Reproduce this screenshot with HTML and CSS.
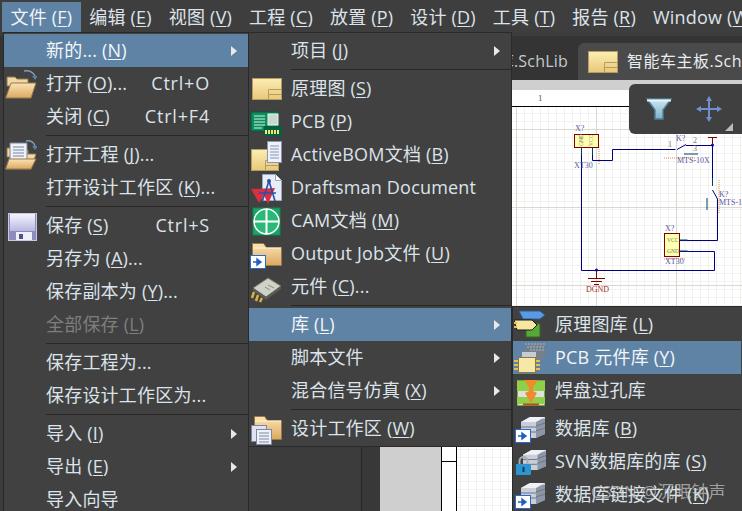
FILE: index.html
```html
<!DOCTYPE html>
<html lang="zh-CN">
<head>
<meta charset="utf-8">
<title>Altium Designer</title>
<link rel="stylesheet" href="styles.css">
</head>
<body>
<svg class="defs" aria-hidden="true">
  <defs>
    <linearGradient id="tan" x1="0" y1="0" x2="0" y2="1"><stop offset="0" stop-color="#fbeeb4"/><stop offset="1" stop-color="#e9c878"/></linearGradient>
    <linearGradient id="folder" x1="0" y1="0" x2="0" y2="1"><stop offset="0" stop-color="#fbe3b4"/><stop offset="1" stop-color="#dca860"/></linearGradient>
    <linearGradient id="floppy" x1="0" y1="0" x2="0" y2="1"><stop offset="0" stop-color="#f4f4ff"/><stop offset="1" stop-color="#b8b8e0"/></linearGradient>
    <linearGradient id="steel" x1="0" y1="0" x2="1" y2="1"><stop offset="0" stop-color="#e4e8ee"/><stop offset="1" stop-color="#8f98a8"/></linearGradient>
    <linearGradient id="funnel" x1="0" y1="0" x2="0" y2="1"><stop offset="0" stop-color="#cfe6f0"/><stop offset="1" stop-color="#7fb0c8"/></linearGradient>
    <symbol id="i-arrowbox" viewBox="0 0 16 14">
      <rect x=".5" y=".5" width="15" height="13" fill="#fff" stroke="#2a6ad0"/>
      <path d="M3 7h6M7 4l4 3-4 3z" fill="#1f5fc0" stroke="#1f5fc0" stroke-width="1.4"/>
    </symbol>
    <symbol id="i-db" viewBox="0 0 26 23">
      <path d="M1 6 10 1h15v17l-9 4H1z" fill="url(#steel)"/>
      <path d="M16 3h9v15l-9 4z" fill="#8d96a6"/>
      <path d="M1 6h15v16H1z" fill="#c9ced8"/>
      <path d="M1 11h15M1 16h15M16 10l9-3M16 15l9-3" stroke="#6e7686" fill="none"/>
      <path d="M1 6 10 1h15l-9 5z" fill="#eef1f5"/>
    </symbol>
    <symbol id="i-openfolder" viewBox="0 0 32 32">
      <path d="M2 9h8l2 2h11v7H2z" fill="#f0d7a4" stroke="#94794c"/>
      <path d="M.7 30 6 15h25l-5 15z" fill="url(#folder)" stroke="#94794c"/>
    </symbol>
  </defs>
</svg>

<div class="page">
  <nav class="menubar">
    <span class="top active">文件 (<u>F</u>)</span>
    <span class="top">编辑 (<u>E</u>)</span>
    <span class="top">视图 (<u>V</u>)</span>
    <span class="top">工程 (<u>C</u>)</span>
    <span class="top">放置 (<u>P</u>)</span>
    <span class="top">设计 (<u>D</u>)</span>
    <span class="top">工具 (<u>T</u>)</span>
    <span class="top">报告 (<u>R</u>)</span>
    <span class="top">Window (<u>W</u>)</span>
  </nav>

  <div class="tabs">
    <div class="tab">原理图库.SchLib</div>
    <div class="tab current">
      <svg class="tab-icon" viewBox="0 0 30 22"><rect x=".5" y=".5" width="29" height="21" fill="url(#tan)" stroke="#b49c62"/><path d="M16.500 21.500v-10h13M16.500 16.500h13" fill="none" stroke="#b49c62"/></svg>
      <span>智能车主板.SchDoc</span>
    </div>
  </div>

  <div class="work">
    <div class="panel"></div>
    <div class="gutter"></div>
    <div class="doc">
      <div class="strip"></div>
      <div class="sheet">
        <div class="ruler-top"><span>1</span></div>
        <div class="sheet-body">
          <div class="ruler-left"><div class="cell"></div></div>
          <div class="grid">
            <svg class="schematic" viewBox="457 107 285 404" width="285" height="404">
              <g fill="none" stroke="#e08a50" stroke-dasharray="1 1">
                <path d="M599 147v17M664 158h31M719 180v34M664 259h22"/>
              </g>
              <g fill="none" stroke="#000080" stroke-width="1">
                <path d="M581.500 147v123.500h133v-19h-35"/>
                <path d="M592.500 147v13.500h20v-11h63"/>
                <path d="M686 145.500h27M712.500 145.500v33M717.500 199v41.500h-38"/>
                <path d="M677 149.500l9-5M712.500 190l5 9"/>
              </g>
              <g fill="none" stroke="#004060" stroke-width="1">
                <path d="M581.500 147v8M592.500 147v8M684 154h14M707 198v12M679.500 240h8M679.500 251h8M712.500 178v8"/>
              </g>
              <g fill="#0000c0">
                <circle cx="712.500" cy="145" r="1.500"/>
                <circle cx="596.500" cy="270" r="1.500"/>
              </g>
              <g fill="none" stroke="#800000">
                <rect x="574.500" y="134.500" width="24" height="13" fill="#ffffb0"/>
                <rect x="664.500" y="233.500" width="15" height="23" fill="#ffffb0"/>
                <path d="M596.500 270v8M588 278.500h17M591 281.500h11M594 284.500h5M712.500 145v-8M708 137.500h9"/>
              </g>
              <g class="sch-blue">
                <text x="575" y="131">X?</text>
                <text x="574" y="168">XT30</text>
                <text x="665" y="231">X?</text>
                <text x="665" y="264">XT30</text>
                <text x="676" y="141">K?</text>
                <text x="677" y="163">MTS-10X</text>
                <text x="719" y="197">K?</text>
                <text x="719" y="205">MTS-10X</text>
              </g>
              <g class="sch-grey">
                <text class="pin" x="667" y="242">VCC</text>
                <text class="pin" x="667" y="253">GND</text>
                <text x="668" y="147">1</text>
                <text x="693" y="143">2</text>
                <text x="693" y="151">3</text>
                <text class="pin" x="581" y="146" transform="rotate(-90 581 146)" dy="2">GND</text>
                <text class="pin" x="591" y="146" transform="rotate(-90 591 146)" dy="2">VCC</text>
              </g>
              <text class="sch-red" x="586" y="292">DGND</text>
            </svg>
          </div>
        </div>
      </div>
    </div>
  </div>

  <div class="tools">
    <svg class="funnel" viewBox="0 0 26 22"><path d="M1 1h24l-8 11v9H9v-9z" fill="url(#funnel)" stroke="#4f7f98" stroke-width="1.400"/><path d="M1 2.500h24" stroke="#e8f4f8" stroke-width="2"/></svg>
    <svg class="move" viewBox="0 0 26 26"><path d="M13 3v20M3 13h20" stroke="#6f8fd0" stroke-width="2"/><path d="M13 0l3 5h-6zM13 26l3-5h-6zM0 13l5-3v6zM26 13l-5-3v6z" fill="#6f8fd0"/></svg>
    <span class="corner"></span>
  </div>

  <div class="menu menu-file">
    <div class="row on"><span class="slot"></span><span>新的... (<u>N</u>)</span><i class="arrow"></i></div>
    <div class="row">
      <span class="slot"><svg class="ico" viewBox="0 0 32 32"><use href="#i-openfolder"/><path d="M19 3q8-1 11 5" fill="none" stroke="#7f9db8" stroke-width="1.500"/><path d="M27 8h6l-3 4z" fill="#5c7f9f"/></svg></span>
      <span>打开 (<u>O</u>)...</span><span class="key">Ctrl+O</span>
    </div>
    <div class="row"><span class="slot"></span><span>关闭 (<u>C</u>)</span><span class="key">Ctrl+F4</span></div>
    <div class="sep"></div>
    <div class="row">
      <span class="slot"><svg class="ico" viewBox="0 0 32 32"><use href="#i-openfolder"/><path d="M5 4h17v19H5z" fill="#eef1f8" stroke="#7f86a0"/><path d="M8 8h11M8 11h11M8 14h11M8 17h11" stroke="#7f86a0"/><path d="M.7 30 4 20h27l-5 10z" fill="url(#folder)" stroke="#94794c"/><path d="M21 2q7-1 9 5" fill="none" stroke="#7f9db8" stroke-width="1.500"/><path d="M27 7h6l-3 4z" fill="#5c7f9f"/></svg></span>
      <span>打开工程 (<u>J</u>)...</span>
    </div>
    <div class="row"><span class="slot"></span><span>打开设计工作区 (<u>K</u>)...</span></div>
    <div class="sep"></div>
    <div class="row">
      <span class="slot"><svg class="ico" viewBox="0 0 32 32"><rect x="3.500" y="3.500" width="28" height="27" fill="#8c8cc0" stroke="#c8c8dc"/><rect x="5" y="4" width="25" height="17" fill="url(#floppy)"/><rect x="11" y="22" width="16" height="8" fill="#f0f0f8"/><rect x="14" y="24" width="4" height="5" fill="#50508a"/></svg></span>
      <span>保存 (<u>S</u>)</span><span class="key">Ctrl+S</span>
    </div>
    <div class="row"><span class="slot"></span><span>另存为 (<u>A</u>)...</span></div>
    <div class="row"><span class="slot"></span><span>保存副本为 (<u>Y</u>)...</span></div>
    <div class="row off"><span class="slot"></span><span>全部保存 (<u>L</u>)</span></div>
    <div class="sep"></div>
    <div class="row"><span class="slot"></span><span>保存工程为...</span></div>
    <div class="row"><span class="slot"></span><span>保存设计工作区为...</span></div>
    <div class="sep"></div>
    <div class="row"><span class="slot"></span><span>导入 (<u>I</u>)</span><i class="arrow"></i></div>
    <div class="row"><span class="slot"></span><span>导出 (<u>E</u>)</span><i class="arrow"></i></div>
    <div class="row"><span class="slot"></span><span>导入向导</span></div>
  </div>

  <div class="menu menu-new">
    <div class="row"><span class="slot"></span><span>项目 (<u>J</u>)</span><i class="arrow"></i></div>
    <div class="sep"></div>
    <div class="row">
      <span class="slot"><svg class="ico" viewBox="0 0 32 32"><rect x="2.500" y="5.500" width="29" height="21" fill="url(#tan)" stroke="#b49c62"/><path d="M18.500 26.500v-10h13M18.500 21.500h13" fill="none" stroke="#b49c62"/></svg></span>
      <span>原理图 (<u>S</u>)</span>
    </div>
    <div class="row">
      <span class="slot"><svg class="ico" viewBox="0 0 32 32"><rect x="1" y="6" width="27" height="19" fill="#0b8d5e" stroke="#06563c"/><path d="M4 10h11M4 13h11M4 16h11M4 19h11M4 22h8" stroke="#d8f4e4"/><rect x="18" y="8" width="10" height="11" fill="#c8d8d0" stroke="#e8f4ec"/><rect x="14" y="20" width="18" height="10" fill="#06603f"/><path d="M16 24v4M19 24v4M22 24v4M25 24v4M28 24v4" stroke="#f0e870" stroke-width="2"/></svg></span>
      <span>PCB (<u>P</u>)</span>
    </div>
    <div class="row">
      <span class="slot"><svg class="ico" viewBox="0 0 32 32"><rect x="1.500" y="10.500" width="27" height="21" fill="url(#tan)" stroke="#b49c62"/><path d="M15.500 31.500v-10h13M15.500 26.500h13" fill="none" stroke="#b49c62"/><rect x="17.500" y="2.500" width="14" height="21" fill="#eef2fa" stroke="#8a94b0"/><path d="M20 7h9M20 10h9M20 13h9M20 16h9M20 19h9" stroke="#8a94b0"/></svg></span>
      <span>ActiveBOM文档 (<u>B</u>)</span>
    </div>
    <div class="row">
      <span class="slot"><svg class="ico" viewBox="0 0 32 32"><path d="M12.500 2.500h13l6 6v20h-19z" fill="#e8eef8" stroke="#a0a8c0"/><path d="M25.500 2.500v6h6" fill="#fff" stroke="#a0a8c0"/><path d="M1 17l24-1-7 16-4-9-5 8z" fill="#d83040"/><path d="M19 9 12 30M19 9l6 20M9 21h17" fill="none" stroke="#2850a8" stroke-width="1.600"/><circle cx="19" cy="9" r="2" fill="#2850a8"/></svg></span>
      <span>Draftsman Document</span>
    </div>
    <div class="row">
      <span class="slot"><svg class="ico" viewBox="0 0 32 32"><rect x="3" y="3" width="27" height="27" fill="#19a468" stroke="#128850"/><circle cx="16.500" cy="16.500" r="12.500" fill="#2cb878" stroke="#fff" stroke-width="1.500"/><path d="M16.500 4v25M4 16.500h25" stroke="#fff" stroke-width="2"/></svg></span>
      <span>CAM文档 (<u>M</u>)</span>
    </div>
    <div class="row">
      <span class="slot"><svg class="ico" viewBox="0 0 32 32"><path d="M2.500 10V5.500h11l3 4h15v18h-29z" fill="url(#folder)" stroke="#94794c"/><path d="M3 10h28" stroke="#fff4d8"/><use href="#i-arrowbox" x="0" y="17" width="16" height="14"/></svg></span>
      <span>Output Job文件 (<u>U</u>)</span>
    </div>
    <div class="row">
      <span class="slot"><svg class="ico" viewBox="0 0 32 32"><path d="M3 17 18 7l13 8-15 11z" fill="#d0d2c8" stroke="#70746c"/><path d="M3 17v3l13 9 15-11v-3L16 26z" fill="#585c54"/><path d="M18 14l6 3M15 16l5 3" stroke="#8a8e84"/><path d="M4 21l-2 6M8 24l-2 6M12 27l-2 4" stroke="#d8b048" stroke-width="2.500"/></svg></span>
      <span>元件 (<u>C</u>)...</span>
    </div>
    <div class="sep"></div>
    <div class="row on"><span class="slot"></span><span>库 (<u>L</u>)</span><i class="arrow"></i></div>
    <div class="row"><span class="slot"></span><span>脚本文件</span><i class="arrow"></i></div>
    <div class="row"><span class="slot"></span><span>混合信号仿真 (<u>X</u>)</span><i class="arrow"></i></div>
    <div class="sep"></div>
    <div class="row">
      <span class="slot"><svg class="ico" viewBox="0 0 32 32"><path d="M4.500 8V3.500h10l3 4h14v19h-27z" fill="url(#folder)" stroke="#94794c"/><path d="M5 8h26" stroke="#fff4d8"/><rect x="1.500" y="12.500" width="15" height="16" fill="#dfe4f2" stroke="#7f86a0"/><rect x="6.500" y="16.500" width="15" height="15" fill="#eef1f8" stroke="#7f86a0"/><path d="M9 20h10M9 23h10M9 26h10M9 29h10" stroke="#7f86a0"/></svg></span>
      <span>设计工作区 (<u>W</u>)</span>
    </div>
  </div>

  <div class="menu menu-lib">
    <div class="row">
      <span class="slot"><svg class="ico" viewBox="0 0 32 32"><path d="M5 2h21l5 4-5 4H9z" fill="#5a9ae0" stroke="#2a5a98"/><rect x="12" y="15" width="14" height="13" fill="#58a838" stroke="#2e6a1e"/><path d="M0 11h18l5 5-5 5H3z" fill="#f6e6a0" stroke="#1c1c1c"/><path d="M0 14h3M0 18h3" stroke="#e8c050" stroke-width="2"/></svg></span>
      <span>原理图库 (<u>L</u>)</span>
    </div>
    <div class="row on">
      <span class="slot"><svg class="ico" viewBox="0 0 32 32"><path d="M8 10 17 2h14v12l-9 8H8z" fill="#75808c"/><path d="M8 10h14v12H8z" fill="#c4ccd4"/><path d="M11 2h20M13 5h18M16 8h15" stroke="#a8b4c0" stroke-dasharray="2 1"/><rect x="4.500" y="15.500" width="17" height="15" fill="#f8e8a8" stroke="#8a7a40"/><path d="M0 19h4M0 23h4M0 27h4M22 19h4M22 23h4M22 27h4" stroke="#e8c050" stroke-width="2"/></svg></span>
      <span>PCB 元件库 (<u>Y</u>)</span>
    </div>
    <div class="row">
      <span class="slot"><svg class="ico" viewBox="0 0 32 32"><rect x="3.500" y="5.500" width="27" height="25" fill="#e0e0dc" stroke="#70a848"/><path d="M3 6h28v10H3zM3 22h28v7H3z" fill="#90d048"/><path d="M10 5h14l-5 7v4l4 2-6 10-6-10 4-2v-4z" fill="#f08a2c"/><path d="M9 29.500h16" stroke="#c04820" stroke-width="2"/></svg></span>
      <span>焊盘过孔库</span>
    </div>
    <div class="sep"></div>
    <div class="row">
      <span class="slot"><svg class="ico" viewBox="0 0 32 32"><use href="#i-db" x="6" y="3" width="26" height="23"/><use href="#i-arrowbox" x="1" y="16" width="16" height="14"/></svg></span>
      <span>数据库 (<u>B</u>)</span>
    </div>
    <div class="row">
      <span class="slot"><svg class="ico" viewBox="0 0 32 32"><use href="#i-db" x="8" y="3" width="25" height="22"/><path d="M5.500 19v-4a4 4 0 0 1 8 0v4" fill="none" stroke="#a8acb4" stroke-width="2"/><rect x="2" y="18" width="15" height="11" rx="1" fill="#2c94d0"/><rect x="8.500" y="21" width="2" height="5" fill="#123a58"/></svg></span>
      <span>SVN数据库的库 (<u>S</u>)</span>
    </div>
    <div class="row">
      <span class="slot"><svg class="ico" viewBox="0 0 32 32"><use href="#i-db" x="6" y="3" width="26" height="23"/><use href="#i-arrowbox" x="1" y="16" width="16" height="14"/></svg></span>
      <span>数据库链接文件 (<u>K</u>)</span>
    </div>
  </div>

  <div class="watermark">CSDN @沉眠钟声</div>
</div>
</body>
</html>
```

FILE: styles.css
```css
html, body {
    margin: 0;
    padding: 0;
}

.defs {
    display: block;
    width: 0;
    height: 0;
}

.page {
    position: relative;
    width: 742px;
    height: 511px;
    overflow: hidden;
    display: flex;
    flex-direction: column;
    background-color: #3c3c3c;
    color: #dce3ea;
    font-family: "Open Sans", "Noto Sans CJK SC", sans-serif;
    font-size: 18px;
    letter-spacing: 0.2px;
    line-height: 33px;
}

u {
    text-underline-offset: 2px;
    text-decoration-thickness: 1px;
}

/* top bar */
.menubar {
    display: flex;
    height: 30px;
    padding: 2px 0 0 2px;
    flex: none;
    background-color: #3e3e3e;
    line-height: 30px;
}
.top {
    padding: 0 8.500px;
    white-space: nowrap;
}
.top.active {
    background-color: #5f83a4;
    color: #f0f4f8;
}

/* document tabs */
.tabs {
    display: flex;
    flex: none;
    height: 44px;
    padding-top: 4px;
    box-sizing: border-box;
    background-color: #343434;
    margin-top: 4px;
    white-space: nowrap;
}
.tab {
    display: flex;
    align-items: center;
    justify-content: flex-end;
    width: 578px;
    flex: none;
    padding-right: 10px;
    box-sizing: border-box;
    color: #c4cad0;
    font-size: 16px;
    margin-top: 3px;
}
.tab.current {
    width: 200px;
    justify-content: flex-start;
    padding: 0 0 0 10px;
    gap: 9px;
    margin-top: 3px;
    background-color: #4a4a4a;
    border-radius: 6px 0 0 0;
    color: #e8edf2;
    letter-spacing: 0.5px;
}
.tab-icon {
    width: 30px;
    height: 22px;
    flex: none;
}

/* workspace under the menus */
.work {
    display: flex;
    flex: 1;
    min-height: 0;
}
.panel {
    width: 362px;
    flex: none;
    border-right: 1px solid #262626;
    box-sizing: border-box;
    background-color: #3c3c3c;
}
.gutter {
    width: 18px;
    flex: none;
    background-color: #383838;
}
.doc {
    flex: 1;
    display: flex;
    flex-direction: column;
    background-color: #cfcfcf;
}
.strip {
    height: 10px;
    flex: none;
}
.sheet {
    flex: 1;
    display: flex;
    flex-direction: column;
    margin-left: 61px;
    background-color: #fff;
    border-left: 1px solid #000;
}
.ruler-top {
    height: 16px;
    flex: none;
    border-bottom: 1px solid #000;
    font: 9px/16px "Liberation Serif", serif;
    color: #555;
    padding-left: 96px;
}
.sheet-body {
    flex: 1;
    display: flex;
    min-height: 0;
}
.ruler-left {
    width: 14px;
    flex: none;
    border-right: 1px solid #000;
}
.ruler-left .cell {
    height: 354px;
    border-bottom: 1px solid #000;
}
.grid {
    flex: 1;
    background-color: #fff;
    background-image:
        linear-gradient(to right, #d9d9d2 1px, transparent 1px),
        linear-gradient(to bottom, #d9d9d2 1px, transparent 1px),
        linear-gradient(to right, #f2f2f0 1px, transparent 1px),
        linear-gradient(to bottom, #f2f2f0 1px, transparent 1px);
    background-size: 80px 78px, 80px 78px, 8px 8px, 8px 8px;
    background-position: 59px 22px, 59px 22px, 3px 6px, 3px 6px;
}
.schematic {
    display: block;
}
.schematic text {
    font-family: "Liberation Serif", serif;
    font-size: 8px;
    letter-spacing: 0;
}
.schematic text.pin {
    font-size: 5.500px;
}
.sch-blue {
    fill: #5a5aa0;
}
.sch-grey {
    fill: #77776a;
}
.sch-red {
    fill: #a03030;
}

/* small floating tool panel */
.tools {
    position: absolute;
    left: 629px;
    top: 84px;
    width: 113px;
    height: 50px;
    display: flex;
    align-items: center;
    gap: 24px;
    padding-left: 17px;
    box-sizing: border-box;
    background-color: #404040;
    border-radius: 6px 0 0 6px;
}
.funnel {
    width: 26px;
    height: 22px;
}
.move {
    width: 26px;
    height: 26px;
}
.corner {
    position: absolute;
    right: 9px;
    bottom: 3px;
    width: 0;
    height: 0;
    border-left: 8px solid transparent;
    border-bottom: 8px solid #bbb;
}

/* drop down menus */
.menu {
    position: absolute;
    box-sizing: border-box;
    padding-top: 1px;
    border: 1px solid #2a2a2a;
    background-color: #414141;
}
.menu-file {
    left: 3px;
    top: 32px;
    width: 246px;
    height: 500px;
}
.menu-new {
    left: 248px;
    top: 32px;
    width: 264px;
    height: 415px;
}
.menu-lib {
    left: 512px;
    top: 306px;
    width: 240px;
    height: 230px;
    padding-right: 10px;
}
.row {
    display: flex;
    align-items: center;
    height: 33px;
    padding-right: 11px;
    white-space: nowrap;
}
.row.on {
    background-color: #5f83a4;
    color: #f2f6fa;
}
.row.off {
    color: #7e7e7e;
}
.slot {
    width: 42px;
    height: 33px;
    flex: none;
    display: flex;
    align-items: center;
    padding-left: 1px;
    box-sizing: border-box;
}
.ico {
    width: 32px;
    height: 32px;
}
.key {
    margin-left: auto;
    margin-right: 27px;
    letter-spacing: 0.8px;
}
.arrow {
    margin-left: auto;
    width: 0;
    height: 0;
    border-left: 6px solid #e8e8e8;
    border-top: 5px solid transparent;
    border-bottom: 5px solid transparent;
}
.sep {
    height: 5px;
    margin-left: 42px;
    box-sizing: border-box;
    padding-top: 2px;
}
.sep::before {
    content: "";
    display: block;
    height: 1px;
    background-color: #282828;
}

.watermark {
    position: absolute;
    left: 591px;
    top: 475px;
    color: rgba(215, 215, 215, 0.65);
    font-size: 17px;
    white-space: nowrap;
}
```
